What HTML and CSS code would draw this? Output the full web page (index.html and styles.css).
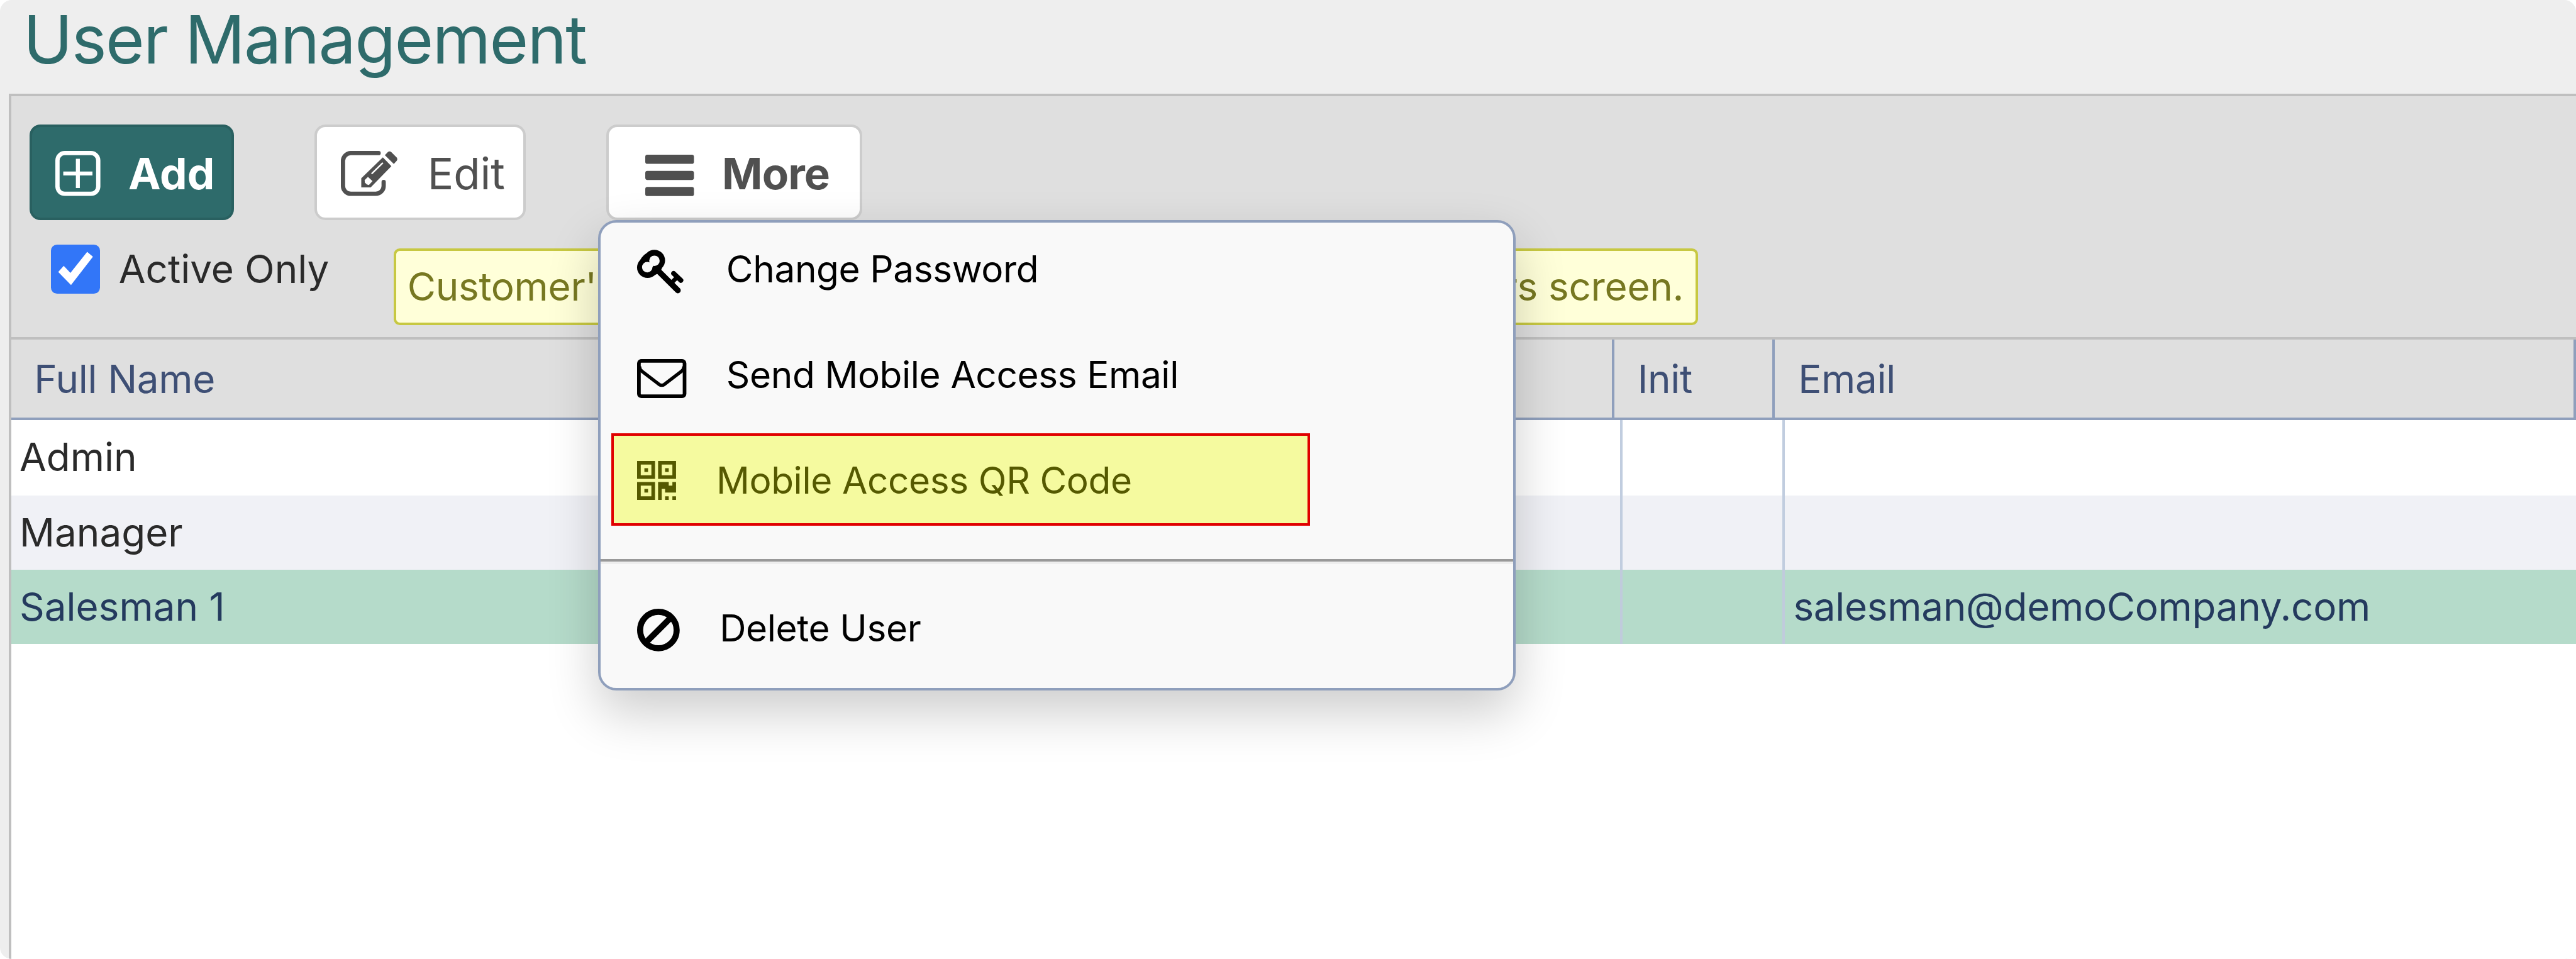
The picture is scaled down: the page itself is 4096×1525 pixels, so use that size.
FILE: index.html
```html
<!DOCTYPE html>
<html lang="en">
<head>
<meta charset="utf-8">
<title>User Management</title>
<link rel="stylesheet" href="styles.css">
</head>
<body>
<div class="window">
  <header class="titlebar"><h1 class="title">User Management</h1></header>
  <main class="panel">
    <section class="toolbar">
      <div class="actions">
        <button class="btn btn-primary">
          <svg class="icon icon-add" viewBox="0 0 74 74"><rect x="3.5" y="3.5" width="67" height="67" rx="12" fill="none" stroke="currentColor" stroke-width="7"/><path d="M37 13v48M13 37h48" stroke="currentColor" stroke-width="6.5" fill="none"/></svg>
          <span class="label">Add</span>
        </button>
        <button class="btn btn-edit">
          <svg class="icon icon-edit" viewBox="0 0 94 74"><path d="M62 3.5H17A13 13 0 0 0 3.5 17V57A13 13 0 0 0 17 70.5H57A13 13 0 0 0 70.3 57V51" fill="none" stroke="currentColor" stroke-width="7" stroke-linecap="round"/><path d="M33.500 60V45L69 10.500L83 25L49 60Z" fill="currentColor"/><path d="M72.300 7L77 2Q80 -.5 83 2L91.500 10.500Q94 13.500 91.500 16.500L87 21.500Z" fill="currentColor"/><path d="M39 48L44.500 42.500L52 49.500L46 56L42.500 55L39.500 52Z" fill="#fff"/><path d="M50.500 37.500L69 19.500" stroke="#fff" stroke-width="2.500"/></svg>
          <span class="label">Edit</span>
        </button>
        <div class="menu-anchor">
          <button class="btn btn-more">
            <svg class="icon icon-more" viewBox="0 0 80 68" fill="currentColor"><rect width="80" height="15" rx="3.500"/><rect y="26.500" width="80" height="15" rx="3.500"/><rect y="53" width="80" height="15" rx="3.500"/></svg>
            <span class="label">More</span>
          </button>
          <div class="menu">
            <div class="item">
              <span class="slot slot-wide"><svg class="icon icon-key" viewBox="0 0 76 72"><path d="M34 34L67 67" stroke="currentColor" stroke-width="9.500" stroke-linecap="round"/><path d="M60 39L72 50.500" stroke="currentColor" stroke-width="8" stroke-linecap="round"/><path d="M54 57L66 45" stroke="currentColor" stroke-width="7"/><path fill="currentColor" d="M16 5.500A17.500 17.500 0 0 1 41 30A17 17 0 0 1 29.500 41.500A17.200 17.200 0 1 1 5 17Q9 10 16 5.500Z"/><circle cx="28.500" cy="18.300" r="8.600" fill="#f9f9f9"/><circle cx="16.700" cy="28.800" r="8.600" fill="#f9f9f9"/><path d="M19 22L28 25L25 29Z" fill="#f9f9f9"/></svg></span>
              <span>Change Password</span>
            </div>
            <div class="item">
              <span class="slot slot-wide"><svg class="icon icon-mail" viewBox="0 0 81 64" fill="none" stroke="currentColor"><rect x="3" y="3" width="75" height="58" rx="4" stroke-width="6"/><path d="M4 12Q4 17 8 20L36 41.500Q40.500 44.500 45 41.500L73 20Q77 17 77 12" stroke-width="5.500"/></svg></span>
              <span>Send Mobile Access Email</span>
            </div>
            <div class="item item-highlight">
              <span class="slot"><svg class="icon icon-qr" viewBox="0 0 64 64" fill="currentColor"><path fill-rule="evenodd" d="M0 0H29.500V29.500H0ZM6 6V23.500H23.500V6ZM34.500 0H64V29.500H34.500ZM40.500 6V23.500H58V6ZM0 34.500H29.500V64H0ZM6 40.500V58H23.500V40.500Z"/><path d="M12 12h6v6h-6zM46 12h6v6h-6zM12 46h6v6h-6zM34.500 34.500H52V40.500H58V34.500H64V52H46V46H40.500V64H34.500ZM46 58h6v6h-6zM58 58h6v6h-6z"/></svg></span>
              <span>Mobile Access QR Code</span>
            </div>
            <div class="divider"></div>
            <div class="item item-delete">
              <span class="slot"><svg class="icon icon-ban" viewBox="0 0 70 70" fill="none" stroke="currentColor" stroke-width="10"><circle cx="35" cy="35" r="30"/><path d="M14 56L56 14"/></svg></span>
              <span>Delete User</span>
            </div>
          </div>
        </div>
      </div>
      <div class="filters">
        <label class="check">
          <span class="box"><svg class="icon tick" viewBox="0 0 80 80"><path d="M12 45L21 35L32 46.500L59.500 12L69 20L33 66.500Z" fill="#fff"/></svg></span>
          <span class="check-label">Active Only</span>
        </label>
        <p class="notice"><span class="notice-start">Customer's</span><span class="notice-end">Customers screen.</span></p>
      </div>
    </section>
    <section class="grid">
      <div class="grid-row grid-head"><div class="cell">Full Name</div><div class="cell">Init</div><div class="cell">Email</div></div>
      <div class="grid-row"><div class="cell">Admin</div><div class="cell"></div><div class="cell"></div></div>
      <div class="grid-row alt"><div class="cell">Manager</div><div class="cell"></div><div class="cell"></div></div>
      <div class="grid-row selected"><div class="cell">Salesman 1</div><div class="cell"></div><div class="cell mail">salesman@demoCompany.com</div></div>
    </section>
  </main>
</div>
</body>
</html>
```
FILE: styles.css
```css
:root { --u: calc(100vw / 4232); }
* { box-sizing: border-box; }
body {
  margin: 0;
  background: #fff;
  font-family: Inter, "Liberation Sans", sans-serif;
  font-size: calc(var(--u) * 64);
  color: #2a2a2a;
  white-space: nowrap;
}
.window {
  height: 100vh;
  display: flex;
  flex-direction: column;
  overflow: hidden;
  padding-left: calc(var(--u) * 14);
  background: #eee;
  border-radius: calc(var(--u) * 19);
}
.titlebar {
  height: calc(var(--u) * 154);
  flex: none;
  padding-left: calc(var(--u) * 24);
}
.title {
  margin: 0;
  font-size: calc(var(--u) * 109.5);
  font-weight: 400;
  line-height: calc(var(--u) * 130);
  letter-spacing: calc(var(--u) * -1.85);
  color: #2e6b6b;
}
.panel {
  flex: 1;
  background: #fff;
  border: solid #bfbfbf;
  border-width: 4px 0 0 4px;
}
.toolbar {
  height: calc(var(--u) * 400);
  padding: calc(var(--u) * 46) 0 0 calc(var(--u) * 30);
  background: #dfdfdf;
  border-bottom: 4px solid #bfbfbf;
}
.actions { display: flex; gap: calc(var(--u) * 132); }
.btn {
  display: flex;
  align-items: center;
  height: calc(var(--u) * 158);
  padding: calc(var(--u) * 4) 0 0;
  font: 400 calc(var(--u) * 71.5)/1 Inter, "Liberation Sans", sans-serif;
  color: #505050;
  background: #fff;
  border: 4px solid #ccc;
  border-radius: calc(var(--u) * 18);
}
.btn .label { padding-top: calc(var(--u) * 2); }
.btn-primary {
  width: calc(var(--u) * 336);
  padding-left: calc(var(--u) * 38.500);
  gap: calc(var(--u) * 46);
  font-weight: 700;
  color: #fff;
  background: #2e6b6b;
  border-color: #296060;
}
.btn-edit {
  width: calc(var(--u) * 348);
  padding-left: calc(var(--u) * 40);
  gap: calc(var(--u) * 48);
}
.btn-more {
  width: calc(var(--u) * 420);
  padding-left: calc(var(--u) * 60);
  gap: calc(var(--u) * 46);
  font-weight: 700;
  letter-spacing: calc(var(--u) * -.9);
}
.icon { display: block; flex: none; overflow: visible; }
.icon-add { width: calc(var(--u) * 74); height: calc(var(--u) * 74); }
.icon-edit { width: calc(var(--u) * 94); height: calc(var(--u) * 74); }
.icon-more { width: calc(var(--u) * 80); height: calc(var(--u) * 68); margin-top: calc(var(--u) * 6); }
.menu-anchor { position: relative; }
.menu {
  position: absolute;
  z-index: 2;
  top: calc(var(--u) * 158);
  left: calc(var(--u) * -14);
  width: calc(var(--u) * 1508);
  height: calc(var(--u) * 772);
  color: #000;
  font-size: calc(var(--u) * 60.500);
  letter-spacing: calc(var(--u) * -.42);
  background: #f9f9f9;
  border: 4px solid #8f9fbc;
  border-radius: calc(var(--u) * 30);
  box-shadow: 0 calc(var(--u) * 36) calc(var(--u) * 84) rgba(0, 0, 0, .2);
}
.item {
  display: flex;
  align-items: center;
  height: calc(var(--u) * 152);
  margin-bottom: calc(var(--u) * 22);
  padding-left: calc(var(--u) * 60);
  line-height: 1;
}
.slot { width: calc(var(--u) * 130.500); }
.slot-wide { width: calc(var(--u) * 147); }
.item-highlight {
  width: calc(var(--u) * 1148);
  margin: calc(var(--u) * -2) 0 0 calc(var(--u) * 18);
  padding: calc(var(--u) * 3) 0 0 calc(var(--u) * 38);
  color: #555900;
  background: #f5fa9f;
  border: 4px solid #e00000;
}
.item-delete { margin: calc(var(--u) * 30) 0 0; }
.item-delete .slot { width: calc(var(--u) * 136); }
.divider {
  height: calc(var(--u) * 8);
  margin-top: calc(var(--u) * 54);
  border-top: 4px solid #999;
  border-bottom: 4px solid #eee;
}
.icon-key { width: calc(var(--u) * 76); height: calc(var(--u) * 72); margin-top: calc(var(--u) * 8); }
.icon-mail { width: calc(var(--u) * 81); height: calc(var(--u) * 64); margin-top: calc(var(--u) * 12); }
.icon-qr { width: calc(var(--u) * 64); height: calc(var(--u) * 64); }
.icon-ban { width: calc(var(--u) * 70); height: calc(var(--u) * 70); margin-top: calc(var(--u) * 6); }
.filters {
  display: flex;
  align-items: flex-start;
  margin-top: calc(var(--u) * 40);
  padding-left: calc(var(--u) * 36);
}
.check {
  display: flex;
  align-items: center;
  width: calc(var(--u) * 563);
  gap: calc(var(--u) * 31);
  line-height: 1;
}
.box {
  width: calc(var(--u) * 80);
  height: calc(var(--u) * 80);
  background: #3276f8;
  border-radius: calc(var(--u) * 10);
}
.tick { width: 100%; height: 100%; }
.notice {
  display: flex;
  align-items: center;
  justify-content: space-between;
  width: calc(var(--u) * 2143);
  height: calc(var(--u) * 126);
  margin: calc(var(--u) * 6) 0 0;
  padding: 0 calc(var(--u) * 20) 0 calc(var(--u) * 18);
  letter-spacing: calc(var(--u) * -.3);
  color: #777821;
  background: #ffffd9;
  border: 4px solid #c7c842;
  border-radius: calc(var(--u) * 10);
}
.grid-row {
  display: grid;
  grid-template-columns: calc(var(--u) * 2648) calc(var(--u) * 266) 1fr;
  height: calc(var(--u) * 122);
  background: #fff;
}
.cell {
  display: flex;
  align-items: center;
  padding: 0 0 calc(var(--u) * 2) calc(var(--u) * 14);
  border-right: 4px solid #c1cddf;
}
.cell:last-child { border-right: 0; }
.mail { letter-spacing: calc(var(--u) * -.3); }
.grid-head {
  grid-template-columns: calc(var(--u) * 2634) calc(var(--u) * 264) 1fr;
  height: calc(var(--u) * 132);
  color: #3e4f75;
  background: #dfdfdf;
  border-bottom: 4px solid #8f9fbc;
}
.grid-head .cell {
  padding: 0 0 0 calc(var(--u) * 38);
  letter-spacing: calc(var(--u) * -.3);
  border-right-color: #8f9fbc;
}
.grid-head .cell:last-child { border-right: 4px solid #8f9fbc; }
.grid-head + .grid-row { height: calc(var(--u) * 124); }
.grid-row.alt { background: #f0f1f6; }
.grid-row.selected { background: #b5dbca; color: #243a5e; }
.selected .cell { border-color: #c0cbdc; }
```
